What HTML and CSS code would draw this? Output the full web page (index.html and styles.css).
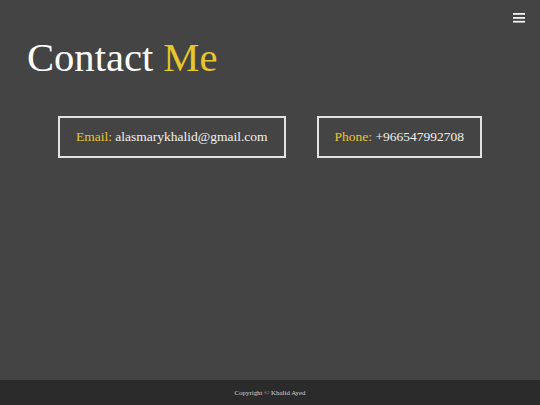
FILE: index.html
```html
<!DOCTYPE html>
<html lang="en">
<head>
<meta charset="utf-8">
<title>Contact Me</title>
<link rel="stylesheet" href="styles.css">
</head>
<body>
<div class="page">
  <header class="topbar">
    <button class="menu" aria-label="Menu">
      <svg width="12" height="10" viewBox="0 0 12 10"><rect x="0" y="0" width="12" height="1.8" fill="#f2f2f2"/><rect x="0" y="4" width="12" height="1.8" fill="#f2f2f2"/><rect x="0" y="7.8" width="12" height="1.8" fill="#f2f2f2"/></svg>
    </button>
  </header>
  <main class="content">
    <h1 class="title">Contact <span class="accent">Me</span></h1>
    <div class="cards">
      <div class="card"><span class="label">Email:</span> alasmarykhalid@gmail.com</div>
      <div class="card"><span class="label">Phone:</span> +966547992708</div>
    </div>
  </main>
  <footer class="footer">Copyright © Khalid Ayed</footer>
</div>
</body>
</html>
```

FILE: styles.css
```css
html, body {
  margin: 0;
  padding: 0;
  height: 100%;
}
body {
  background: #444444;
  font-family: "Liberation Serif", "Times New Roman", serif;
  color: #f4f4f4;
}
.page {
  min-height: 100vh;
  display: flex;
  flex-direction: column;
}
.topbar {
  display: flex;
  justify-content: flex-end;
  padding: 13px 15px 0 0;
}
.menu {
  background: none;
  border: 0;
  padding: 0;
  width: 12px;
  height: 10px;
  display: block;
  cursor: pointer;
}
.menu svg {
  display: block;
}
.content {
  flex: 1;
}
.title {
  margin: 12px 0 0 27px;
  font-size: 40.6px;
  line-height: 46px;
  font-weight: normal;
  color: #ffffff;
}
.accent {
  color: #e6c72b;
}
.cards {
  margin-top: 35px;
  display: flex;
  justify-content: center;
  gap: 31px;
}
.card {
  border: 2px solid #e2e2e2;
  padding: 11px 16px;
  font-size: 13.5px;
  line-height: 16px;
  color: #f0f0f0;
}
.label {
  color: #e6c72b;
}
.footer {
  height: 25px;
  background: #2b2b2b;
  color: #d0d0d0;
  font-size: 6.9px;
  display: flex;
  align-items: center;
  justify-content: center;
}
```
